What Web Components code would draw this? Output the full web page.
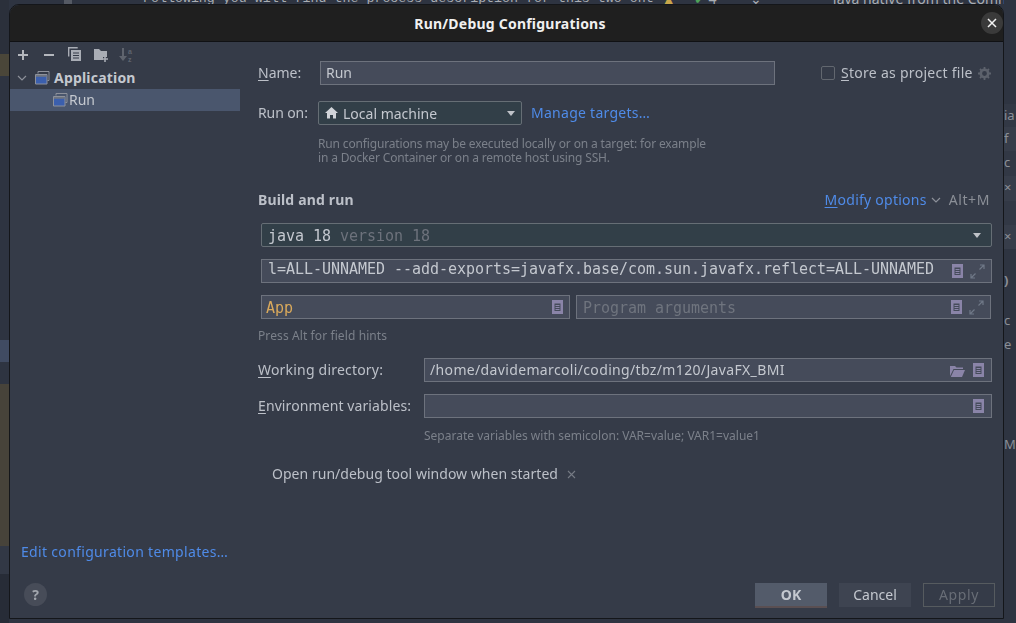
<!DOCTYPE html>
<html lang="en"><head><meta charset="utf-8"><title>Run/Debug Configurations</title>
<style>
html,body{margin:0;height:100%;overflow:hidden;background:#2e3441}
body{font-family:"Noto Sans",sans-serif;font-size:14px;color:#bcc0c8}
</style></head><body>
<ide-backdrop></ide-backdrop>
<run-dialog></run-dialog>
<script>
const ICONS={
plus:'<path d="M6 1v10M1 6h10" stroke="#b4b7bd" stroke-width="2" fill="none"/>',
minus:'<path d="M1 6h10" stroke="#b4b7bd" stroke-width="2" fill="none"/>',
copy:'<path d="M.7 9.5V.7h9" fill="none" stroke="#a9adb5" stroke-width="1.4"/><path d="M3 3h10v11H3z" fill="#a9adb5"/><path d="M5 6h6M5 8.5h6M5 11h6" stroke="#353b48" stroke-width="1.1"/>',
folderplus:'<path d="M0 1h5l2 2h6v6H9v3H0z" fill="#a9adb5"/><path d="M11 8v6M8 11h6" stroke="#a9adb5" stroke-width="1.6"/>',
sort:'<path d="M4 0v9" stroke="#5f646e" stroke-width="2"/><path d="M0 8h8l-4 5z" fill="#5f646e"/><text x="9" y="6" font-size="7" font-family="Liberation Sans" font-weight="700" fill="#5f646e">a</text><text x="9" y="13.500" font-size="7" font-family="Liberation Sans" font-weight="700" fill="#5f646e">z</text>',
chev:'<path d="M1 1l4 4 4-4" fill="none" stroke="#8c9099" stroke-width="1.2"/>',
app:'<path d="M3 2.500V.5h11v9h-1.500" fill="none" stroke="#8d919b" stroke-width="1"/><path d="M.5 3.500h11.500v9.500H.5z" fill="#3b5fad" stroke="#8d919b"/><path d="M1 4h10.500v1.800H1z" fill="#70757f"/>',
home:'<path d="M6.500 0L13 6h-2v5.500H8V8H5v3.500H2V6H0z" fill="#d0d3d8"/>',
doc:'<path d="M0 0h11v14H0z" fill="#8a84a8"/><path d="M2.500 3.500h6v7.500h-6z" fill="#454b5a"/><path d="M3.500 5.500h4M3.500 7.500h4M3.500 9.500h4" stroke="#8a84a8" stroke-width="1"/>',
expand:'<path d="M9.500 5.500L14 1M10 1h4v4M5.500 9.500L1 14M1 10v4h4" fill="none" stroke="#6f7887" stroke-width="1.200"/>',
folder:'<path d="M0 2h5l1.500 1.500H13V5H3.500L0 12z" fill="#8a84a8"/><path d="M4 6h11l-3 7H.8z" fill="#8a84a8"/>',
gear:'<circle cx="6.500" cy="6.500" r="3.700" fill="none" stroke="#5d626c" stroke-width="2.600"/><path d="M6.500 0v2.500M6.500 10.500V13M0 6.500h2.500M10.500 6.500H13M2 2l1.800 1.800M9.200 9.200L11 11M11 2L9.200 3.800M3.800 9.200L2 11" stroke="#5d626c" stroke-width="1.800"/>',
x:'<path d="M1 1l7 7M8 1L1 8" stroke="#767b85" stroke-width="1.100" fill="none"/>',
close:'<path d="M1 1l8 8M9 1L1 9" stroke="#f2f2f2" stroke-width="1.500" fill="none"/>'
};
const SIZES={plus:[12,12],minus:[12,12],copy:[14,15],folderplus:[14,14],sort:[14,14],chev:[10,7],app:[15,14],home:[13,12],doc:[11,14],expand:[15,15],folder:[15,13],gear:[13,13],x:[9,9],close:[10,10]};
class IdeIcon extends HTMLElement{
  connectedCallback(){
    const n=this.getAttribute('name'),[w,h]=SIZES[n];
    this.attachShadow({mode:'open'}).innerHTML=`<style>:host{display:inline-flex;flex:none;line-height:0}</style><svg width="${w}" height="${h}" viewBox="0 0 ${w} ${h}">${ICONS[n]}</svg>`;
  }
}
customElements.define('ide-icon',IdeIcon);

class IdeBackdrop extends HTMLElement{
  connectedCallback(){
    this.attachShadow({mode:'open'}).innerHTML=`<style>
    :host{position:fixed;inset:0;display:grid;grid-template-columns:9px 1fr 12px;background:#2e3441;overflow:hidden;font-family:"Liberation Mono",monospace;color:#a9adb3}
    .col{display:flex;flex-direction:column}
    .b{flex:none}
    .top{height:5px;overflow:hidden;display:flex;align-items:flex-end;white-space:nowrap;font-size:13.3px;line-height:12px}
    .top span{flex:none}
    .s{font:14px/12px "Noto Sans",sans-serif}
    .r{font:13px/22px "Noto Sans",sans-serif;color:#8b8f97;overflow:hidden;white-space:nowrap}
    </style>
    <div class="col">
      <div class="b" style="height:54px;background:#2b303b"></div>
      <div class="b" style="height:22px;background:#4a4639"></div>
      <div class="b" style="height:264px;background:#2e3441"></div>
      <div class="b" style="height:22px;background:#404b62"></div>
      <div class="b" style="height:22px;background:#2e3441"></div>
      <div class="b" style="height:162px;background:#47433a"></div>
      <div class="b" style="height:28px;background:#323845"></div>
      <div class="b" style="flex:1;background:#272c37"></div>
    </div>
    <div class="top">
      <span style="width:55px"></span><span style="width:8px;height:5px;background:#555a64"></span>
      <span style="width:71px"></span><span>Following you will find the process description for this two ont</span>
      <span class="s" style="margin-left:8px;color:#c9a64a">▲</span><span class="s" style="margin-left:18px;color:#4fa35a">✔</span><span class="s" style="margin-left:3px">4</span><span class="s" style="margin-left:9px">⌃</span><span class="s" style="margin-left:12px">⌄</span>
      <span class="s" style="margin-left:57px">•</span><span class="s" style="margin-left:9px">Java native from the Comm</span>
    </div>
    <div class="col">
      <div style="height:104px;background:#2e3441"></div>
      <div class="r" style="background:#323845;height:23px">ia</div>
      <div class="r" style="background:#373d4a;height:24px"> f</div>
      <div class="r" style="background:#323845;height:25px">c</div>
      <div class="r" style="background:#373d4a;height:25px">×</div>
      <div class="r" style="background:#323845;height:24px"></div>
      <div class="r" style="background:#373d4a;height:24px">×</div>
      <div class="r" style="height:40px;padding-top:20px;font-weight:700">)</div>
      <div class="r" style="height:24px">c</div>
      <div class="r" style="height:100px">e</div>
      <div class="r">M</div>
    </div>`;
  }
}
customElements.define('ide-backdrop',IdeBackdrop);

class TreeRow extends HTMLElement{
  connectedCallback(){
    const s=this.attachShadow({mode:'open'});
    s.innerHTML=`<style>
    :host{display:flex;align-items:center;height:22px;color:#c4c8cf}
    :host([selected]){background:#4a566d;padding-left:43px}
    :host([selected]) .t{margin-left:1px}
    :host([parent]){padding-left:7px;font-weight:700;letter-spacing:.2px}
    .c{display:inline-flex;width:18px}
    .t{margin-left:4px;padding-bottom:1px}
    </style>${this.hasAttribute('parent')?'<span class="c"><ide-icon name="chev"></ide-icon></span>':''}<ide-icon name="app"></ide-icon><span class="t"><slot></slot></span>`;
  }
}
customElements.define('tree-row',TreeRow);

class TextField extends HTMLElement{
  connectedCallback(){
    const s=this.attachShadow({mode:'open'});
    s.innerHTML=`<style>
    :host{display:flex;align-items:center;box-sizing:border-box;height:24px;background:#454b5a;border:1px solid #6d727d;padding:0 5px;gap:6px;color:#c4c8cf;flex:none;min-width:0}
    :host([mono]){font:15px "DejaVu Sans Mono",monospace;padding:0 6px;letter-spacing:-.03px}
    :host([select]){background:#323f48;border-radius:2px;border-color:#666e75;padding:0 6px}
    .t{flex:1;white-space:nowrap;overflow:hidden;padding-bottom:var(--text-lift,2px);padding-top:var(--text-drop,0)}
    .e{display:inline-flex;gap:var(--end-gap,7px);align-items:center}
    </style><span class="t"><slot></slot></span><span class="e"><slot name="end"></slot></span>`;
  }
}
customElements.define('text-field',TextField);

class DialogButton extends HTMLElement{
  connectedCallback(){
    this.attachShadow({mode:'open'}).innerHTML=`<style>
    :host{display:flex;align-items:center;justify-content:center;box-sizing:border-box;width:72px;height:24px;padding-bottom:2px;background:#3e4451;color:#c4c8cf;flex:none}
    :host([primary]){height:25px;padding-bottom:0;background:#535b6a;border-bottom:2px solid #5a4f52;font-weight:700;align-self:flex-start}
    :host([disabled]){background:transparent;border:1px solid #565b5f;color:#686d76;letter-spacing:.6px}
    </style><slot></slot>`;
  }
}
customElements.define('dialog-button',DialogButton);

class RunDialog extends HTMLElement{
  connectedCallback(){
    this.attachShadow({mode:'open'}).innerHTML=`<style>
    :host{position:absolute;left:9px;top:4px;width:995px;height:615px;box-sizing:border-box;border:1px solid #14161a;border-radius:10px 10px 0 0;background:#353b48;display:flex;flex-direction:column;overflow:hidden;font-size:14px;color:#bcc0c8}
    u{text-underline-offset:2px;text-decoration-thickness:1px}
    a{color:#4f8be8;text-decoration:none}
    .title{flex:none;height:37px;box-sizing:border-box;padding-left:7px;background:#1f1f1f;border-bottom:1px solid #101114;display:flex;align-items:center;justify-content:center;position:relative;font-weight:700;color:#f0f0f0;letter-spacing:.22px}
    .close{position:absolute;right:0;top:7px;width:22px;height:22px;border-radius:50%;background:#3a3a3a;display:flex;align-items:center;justify-content:center}
    .main{flex:1;display:grid;grid-template-columns:230px 1fr;min-height:0}
    .side{display:flex;flex-direction:column}
    .tools{display:flex;align-items:center;height:25px;flex:none}
    .tree{flex:1}
    .edit{height:20px;line-height:20px;padding:0 0 10px 11px;white-space:nowrap;letter-spacing:.32px}
    .form{padding:19px 0 0 18px;display:flex;flex-direction:column;min-width:0}
    .row{display:flex;align-items:center;flex:none}
    .hint{color:#7b808a;font-size:12px;line-height:14px;flex:none}
    .label{flex:none;padding-bottom:2px}
    .muted{color:#6d727c}
    .cb{width:14px;height:14px;box-sizing:border-box;border:1px solid #62676f;border-radius:2px;flex:none}
    .foot{flex:none;height:46px;box-sizing:border-box;padding:11px 8px 0 14px;display:flex;gap:12px}
    .help{width:23px;height:23px;border-radius:50%;background:#474c58;color:#a3a7ae;font-weight:700;display:flex;align-items:center;justify-content:center;flex:none;margin-right:auto;font-size:14px}
    .arrow{width:0;height:0;border:4.500px solid transparent;border-top:5px solid #bfc2c8;border-bottom:0;flex:none}
    </style>
    <div class="title">Run/Debug Configurations<span class="close"><ide-icon name="close"></ide-icon></span></div>
    <div class="main">
      <div class="side">
        <div class="tools">
          <ide-icon name="plus" style="margin-left:7px"></ide-icon>
          <ide-icon name="minus" style="margin-left:14px"></ide-icon>
          <ide-icon name="copy" style="margin-left:13px"></ide-icon>
          <ide-icon name="folderplus" style="margin-left:12px"></ide-icon>
          <ide-icon name="sort" style="margin-left:11px"></ide-icon>
        </div>
        <div class="tree">
          <tree-row parent>Application</tree-row>
          <tree-row selected>Run</tree-row>
        </div>
        <div class="edit"><a>Edit configuration templates…</a></div>
      </div>
      <div class="form">
        <div class="row" style="height:24px">
          <span class="label" style="width:62px"><u>N</u>ame:</span>
          <text-field style="width:455px">Run</text-field>
          <span class="cb" style="margin-left:46px"></span>
          <span style="margin-left:6px;white-space:nowrap;letter-spacing:.28px;padding-bottom:2px"><u>S</u>tore as project file</span>
          <ide-icon name="gear" style="margin-left:5px"></ide-icon>
        </div>
        <div class="row" style="margin-top:16px;height:24px">
          <span class="label" style="width:60px;letter-spacing:-.1px">Run on:</span>
          <text-field select style="width:204px;padding-right:6px;--text-lift:0px"><span style="display:flex;align-items:center;gap:5px"><ide-icon name="home"></ide-icon>Local machine</span><span slot="end" class="arrow"></span></text-field>
          <a style="margin-left:9px;white-space:nowrap;letter-spacing:.27px;padding-bottom:2px">Manage targets…</a>
        </div>
        <div class="hint" style="margin:12px 0 0 60px;letter-spacing:-.15px">Run configurations may be executed locally or on a target: for example<br>in a Docker Container or on a remote host using SSH.</div>
        <div class="row" style="margin-top:25px;height:20px;width:732px">
          <b style="margin-right:auto;letter-spacing:.15px;padding-bottom:2px">Build and run</b>
          <a style="white-space:nowrap;letter-spacing:.25px;padding-bottom:2px"><u>M</u>odify options</a>
          <ide-icon name="chev" style="margin-left:4px"></ide-icon>
          <span style="margin-left:8px;color:#8b8f97;letter-spacing:.6px;padding-bottom:2px">Alt+M</span>
        </div>
        <text-field mono select style="margin:13px 0 0 3px;width:731px;--text-lift:0px;--text-drop:1px">java 18 <span class="muted">version 18</span><span slot="end" class="arrow" style="margin-right:4px"></span></text-field>
        <text-field mono style="margin:12px 0 0 3px;width:731px;--text-lift:4px">l=ALL-UNNAMED --add-exports=javafx.base/com.sun.javafx.reflect=ALL-UNNAMED<ide-icon slot="end" name="doc"></ide-icon><ide-icon slot="end" name="expand"></ide-icon></text-field>
        <div class="row" style="margin:12px 0 0 3px;gap:6px">
          <text-field mono style="width:309px;color:#d9a95c;padding:0 6px 0 4px;--text-lift:0px;--text-drop:1px">App<ide-icon slot="end" name="doc"></ide-icon></text-field>
          <text-field mono style="width:415px;color:#6f747e;padding-right:6px;--text-lift:0px;--text-drop:1px">Program arguments<ide-icon slot="end" name="doc"></ide-icon><ide-icon slot="end" name="expand"></ide-icon></text-field>
        </div>
        <div class="hint" style="margin-top:9px;line-height:16px;letter-spacing:.1px">Press Alt for field hints</div>
        <div class="row" style="margin-top:14px">
          <span class="label" style="width:166px;letter-spacing:.2px"><u>W</u>orking directory:</span>
          <text-field style="width:568px;padding-right:7px;letter-spacing:.35px;--end-gap:8px">/home/davidemarcoli/coding/tbz/m120/JavaFX_BMI<ide-icon slot="end" name="folder"></ide-icon><ide-icon slot="end" name="doc"></ide-icon></text-field>
        </div>
        <div class="row" style="margin-top:12px">
          <span class="label" style="width:166px;letter-spacing:.1px"><u>E</u>nvironment variables:</span>
          <text-field style="width:568px;padding-right:7px"><ide-icon slot="end" name="doc"></ide-icon></text-field>
        </div>
        <div class="hint" style="margin:10px 0 0 166px;line-height:16px">Separate variables with semicolon: VAR=value; VAR1=value1</div>
        <div class="row" style="margin:20px 0 0 14px;height:20px">
          <span style="white-space:nowrap;padding-bottom:2px;letter-spacing:.03px">Open run/debug tool window when started</span>
          <ide-icon name="x" style="margin-left:9px"></ide-icon>
        </div>
      </div>
    </div>
    <div class="foot">
      <span class="help">?</span>
      <dialog-button primary>OK</dialog-button>
      <dialog-button>Cancel</dialog-button>
      <dialog-button disabled>Apply</dialog-button>
    </div>`;
  }
}
customElements.define('run-dialog',RunDialog);
</script>
</body></html>
